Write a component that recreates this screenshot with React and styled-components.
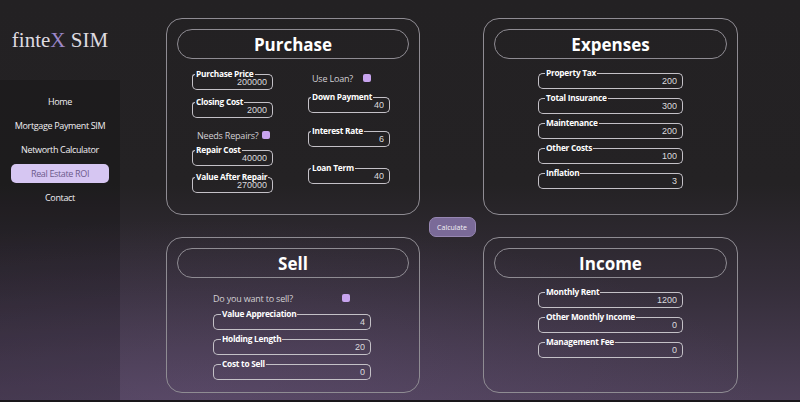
import React from "react";
import styled, { createGlobalStyle } from "styled-components";

const GlobalStyle = createGlobalStyle`
  html, body {
    margin: 0;
    padding: 0;
    background: #19171a;
  }
  * {
    box-sizing: border-box;
  }
`;

const navItems = [
  "Home",
  "Mortgage Payment SIM",
  "Networth Calculator",
  "Real Estate ROI",
  "Contact",
];

// outlined input: the top edge is split round the caption
const Field = ({ label, value, mt = 0, width = 81 }) => (
  <FieldBox $mt={mt} $w={width}>
    <TopEdge>
      <EdgeLeft $w={Math.round(width * 0.065) - 2} />
      <Caption>{label}</Caption>
      <EdgeRight />
    </TopEdge>
    <Body>
      <ValueInput defaultValue={value} />
    </Body>
  </FieldBox>
);

const Toggle = ({ label, mt = 0, ml = 0, width }) => (
  <ToggleRow $mt={mt} $ml={ml} $w={width}>
    <span>{label}</span>
    <Check />
  </ToggleRow>
);

const App = () => {
  return (
    <>
      <GlobalStyle />
      <Page>
        <Sidebar>
          <Logo>
            <LogoText>
              finte<span>X</span> SIM
            </LogoText>
          </Logo>
          <Nav>
            {navItems.map((item) => (
              <NavItem key={item} $active={item === "Real Estate ROI"}>
                {item}
              </NavItem>
            ))}
          </Nav>
        </Sidebar>

        <Main>
          <Grid>
            <Card>
              <Title>Purchase</Title>
              <TwoCols>
                <Col>
                  <Field label="Purchase Price" value="200000" mt={11} />
                  <Field label="Closing Cost" value="2000" mt={8} />
                  <Toggle label="Needs Repairs?" mt={12} ml={5} width={73} />
                  <Field label="Repair Cost" value="40000" mt={6} />
                  <Field label="Value After Repair" value="270000" mt={7} />
                </Col>
                <Col>
                  <Toggle label="Use Loan?" mt={14} ml={4} width={59} />
                  <Field label="Down Payment" value="40" mt={10} width={82} />
                  <Field label="Interest Rate" value="6" mt={14} width={82} />
                  <Field label="Loan Term" value="40" mt={17} width={82} />
                </Col>
              </TwoCols>
            </Card>

            <Card>
              <Title>Expenses</Title>
              <List>
                <Field label="Property Tax" value="200" width={145} />
                <Field label="Total Insurance" value="300" width={145} />
                <Field label="Maintenance" value="200" width={145} />
                <Field label="Other Costs" value="100" width={145} />
                <Field label="Inflation" value="3" width={145} />
              </List>
            </Card>

            <ButtonRow>
              <CalcButton>Calculate</CalcButton>
            </ButtonRow>

            <Card>
              <Title>Sell</Title>
              <SellList>
                <Toggle label="Do you want to sell?" width={137} />
                <Field label="Value Appreciation" value="4" width={158} mt={2} />
                <Field label="Holding Length" value="20" width={158} />
                <Field label="Cost to Sell" value="0" width={158} />
              </SellList>
            </Card>

            <Card>
              <Title>Income</Title>
              <List>
                <Field label="Monthly Rent" value="1200" width={145} />
                <Field label="Other Monthly Income" value="0" width={145} />
                <Field label="Management Fee" value="0" width={145} />
              </List>
            </Card>
          </Grid>
        </Main>
      </Page>
    </>
  );
};

export default App;

const Page = styled.div`
  display: flex;
  width: 800px;
  height: 400px;
  font-family: "Open Sans", "Noto Sans", sans-serif;
  color: #eee;
  background:
    radial-gradient(ellipse 70% 45% at 25% 100%, rgba(110, 88, 130, 0.35), transparent 100%),
    linear-gradient(180deg, #232123 0%, #242224 46%, #352e3a 72%, #4d4058 100%);
`;

const Sidebar = styled.aside`
  width: 120px;
  display: flex;
  flex-direction: column;
`;

const Logo = styled.div`
  height: 80px;
  display: flex;
  align-items: center;
  justify-content: center;
`;

const LogoText = styled.div`
  font-family: "Liberation Serif", "DejaVu Serif", serif;
  font-size: 21px;
  color: #dedbe0;
  white-space: pre;
  span {
    color: #9c87c8;
  }
`;

const Nav = styled.nav`
  flex: 1;
  display: flex;
  flex-direction: column;
  gap: 5px;
  padding: 12px 11px 0;
  background: rgba(0, 0, 0, 0.17);
`;

const NavItem = styled.div`
  height: 19px;
  display: flex;
  align-items: center;
  justify-content: center;
  border-radius: 5px;
  font-size: 9px;
  letter-spacing: -0.35px;
  white-space: nowrap;
  color: ${(p) => (p.$active ? "#6c5a8c" : "#f0eef2")};
  background: ${(p) => (p.$active ? "#d6c6f2" : "transparent")};
`;

const Main = styled.main`
  flex: 1;
  padding: 18px 0 0 46px;
`;

const Grid = styled.div`
  display: grid;
  grid-template-columns: 254px 255px;
  grid-template-rows: 197px 22px 156px;
  column-gap: 63px;
`;

const Card = styled.section`
  border: 1px solid #8f8c93;
  border-radius: 16px;
  padding: 10px;
  display: flex;
  flex-direction: column;
`;

const Title = styled.h2`
  margin: 0;
  height: 30px;
  flex: none;
  border: 1px solid #8f8c93;
  border-radius: 15px;
  display: flex;
  align-items: center;
  justify-content: center;
  font-size: 17px;
  font-weight: 700;
  color: #fff;
`;

const TwoCols = styled.div`
  display: grid;
  grid-template-columns: 81px 82px;
  column-gap: 35px;
  padding-left: 15px;
`;

const Col = styled.div`
  display: flex;
  flex-direction: column;
`;

const List = styled.div`
  display: flex;
  flex-direction: column;
  align-items: center;
  gap: 5px;
  padding-top: 10px;
`;

const SellList = styled(List)`
  align-items: flex-start;
  padding-top: 15px;
  padding-left: 36px;
`;

const FieldBox = styled.label`
  display: flex;
  flex-direction: column;
  flex: none;
  margin-top: ${(p) => p.$mt}px;
  width: ${(p) => p.$w}px;
  height: 20px;
`;

const TopEdge = styled.div`
  display: flex;
  height: 10px;
`;

const EdgeLeft = styled.span`
  width: ${(p) => p.$w}px;
  margin-top: 4px;
  border-top: 1px solid #c4c1c7;
  border-left: 1px solid #c4c1c7;
  border-top-left-radius: 5px;
`;

const EdgeRight = styled.span`
  flex: 1;
  margin-top: 4px;
  border-top: 1px solid #c4c1c7;
  border-right: 1px solid #c4c1c7;
  border-top-right-radius: 5px;
`;

const Caption = styled.span`
  padding: 0 1px;
  font-size: 8.3px;
  line-height: 8px;
  font-weight: 700;
  letter-spacing: -0.25px;
  color: #fff;
  white-space: nowrap;
`;

const Body = styled.div`
  flex: 1;
  padding: 0 5px;
  border: 1px solid #c4c1c7;
  border-top: none;
  border-radius: 0 0 5px 5px;
`;

const ValueInput = styled.input`
  display: block;
  width: 100%;
  height: 10px;
  margin: -3px 0 0;
  padding: 0;
  border: none;
  outline: none;
  background: transparent;
  text-align: right;
  font-family: "Liberation Sans", Arial, sans-serif;
  font-size: 9px;
  line-height: 10px;
  color: #dcdadd;
`;

const ToggleRow = styled.div`
  margin: ${(p) => p.$mt}px 0 0 ${(p) => p.$ml}px;
  width: ${(p) => p.$w}px;
  height: 10px;
  display: flex;
  align-items: center;
  justify-content: space-between;
  font-size: 9px;
  letter-spacing: -0.2px;
  color: #d2d0d4;
  white-space: nowrap;
`;

const Check = styled.span`
  width: 8px;
  height: 8px;
  border-radius: 2px;
  background: #c8a4ef;
  flex: none;
`;

const ButtonRow = styled.div`
  grid-column: 1 / span 2;
  display: flex;
  justify-content: center;
  align-items: flex-end;
`;

const CalcButton = styled.button`
  width: 47px;
  height: 20px;
  padding: 0;
  border: 1px solid #9787b3;
  border-radius: 7px;
  background: #7a6a98;
  color: #f4f2f7;
  font-family: "Open Sans", sans-serif;
  font-size: 7px;
  cursor: pointer;
`;
